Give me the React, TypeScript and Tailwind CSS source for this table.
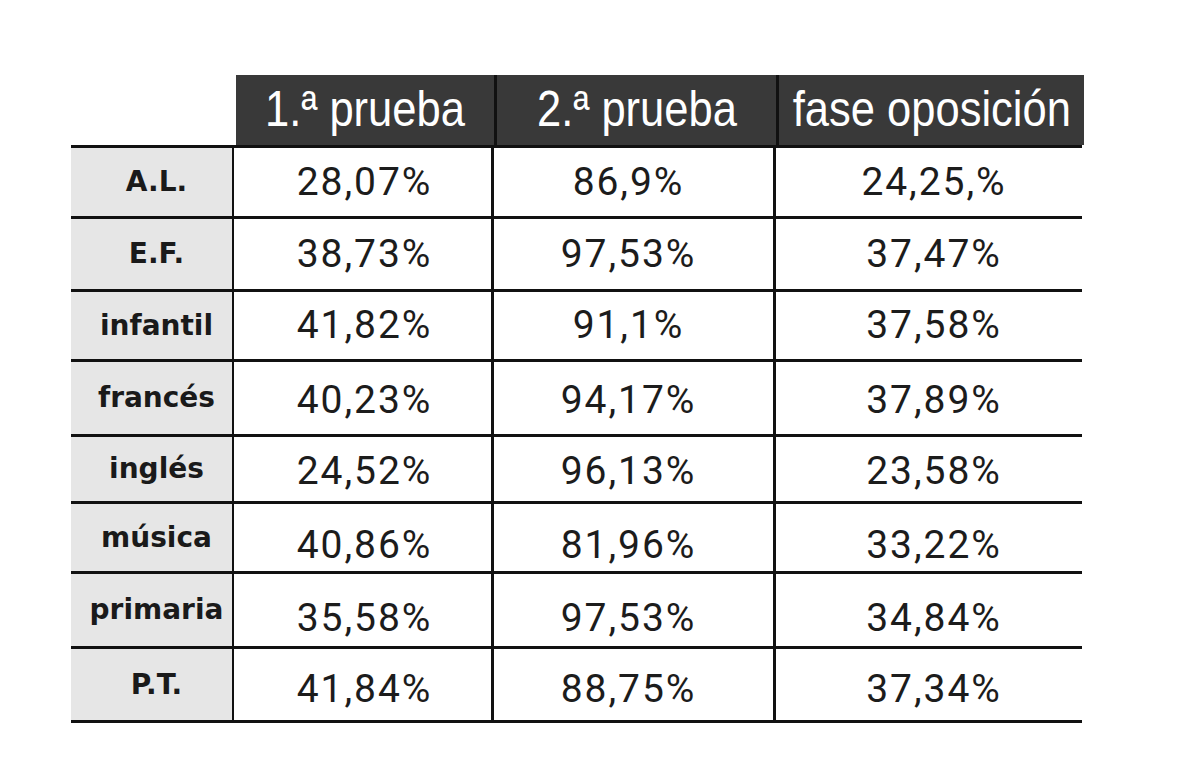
const rows = [
  { label: "A.L.", a: "28,07%", b: "86,9%", c: "24,25,%", h: "h-[71px]", pt: "" },
  { label: "E.F.", a: "38,73%", b: "97,53%", c: "37,47%", h: "h-[73px]", pt: "" },
  { label: "infantil", a: "41,82%", b: "91,1%", c: "37,58%", h: "h-[70px]", pt: "" },
  { label: "francés", a: "40,23%", b: "94,17%", c: "37,89%", h: "h-[75px]", pt: "pt-[4px]" },
  { label: "inglés", a: "24,52%", b: "96,13%", c: "23,58%", h: "h-[67px]", pt: "pt-[4px]" },
  { label: "música", a: "40,86%", b: "81,96%", c: "33,22%", h: "h-[70px]", pt: "pt-[16px]" },
  { label: "primaria", a: "35,58%", b: "97,53%", c: "34,84%", h: "h-[75px]", pt: "pt-[16px]" },
  { label: "P.T.", a: "41,84%", b: "88,75%", c: "37,34%", h: "h-[74px]", pt: "pt-[10px]" },
];

const numCls =
  "flex items-center justify-center text-[39px] tracking-[0.05em] text-[#1c1c1c] font-['Roboto',sans-serif]";

const HeadCell = ({ text, cls }: { text: string; cls: string }) => (
  <div className={`flex items-center justify-center bg-[#393939] overflow-hidden ${cls}`}>
    <span className="inline-block scale-x-[0.87] text-[50px] leading-none text-white font-['Liberation_Sans',Arial,sans-serif] whitespace-nowrap pb-[2px]">
      {text}
    </span>
  </div>
);

export default function App() {
  return (
    <div className="w-[1200px] h-[769px] bg-white pt-[75px] pl-[71px]">
      <div className="w-[1013px]">
        {/* header */}
        <div className="flex h-[70px]">
          <div className="w-[165px]" />
          <HeadCell text="1.ª prueba" cls="w-[261px] border-r-[3px] border-[#111]" />
          <HeadCell text="2.ª prueba" cls="w-[282px] border-r-[3px] border-[#111]" />
          <HeadCell text="fase oposición" cls="w-[305px]" />
        </div>
        <div className="h-[3px] bg-[#111] w-[1011px]" />
        {rows.map((r) => (
          <div key={r.label} className={`flex border-b-[3px] border-[#111] w-[1011px] ${r.h}`}>
            <div className="w-[163px] shrink-0 border-r-2 border-[#111] bg-[#e6e6e6] flex items-center justify-center pl-[10px] text-[28px] font-bold text-[#1a1a1a] font-['DejaVu_Sans',sans-serif]">
              {r.label}
            </div>
            <div className={`w-[260px] shrink-0 border-r-[3px] border-[#111] ${numCls} ${r.pt} pl-[4px]`}>{r.a}</div>
            <div className={`w-[282px] shrink-0 border-r-[3px] border-[#111] ${numCls} ${r.pt} pr-[10px]`}>{r.b}</div>
            <div className={`flex-1 ${numCls} ${r.pt} pl-[10px]`}>{r.c}</div>
          </div>
        ))}
      </div>
    </div>
  );
}
